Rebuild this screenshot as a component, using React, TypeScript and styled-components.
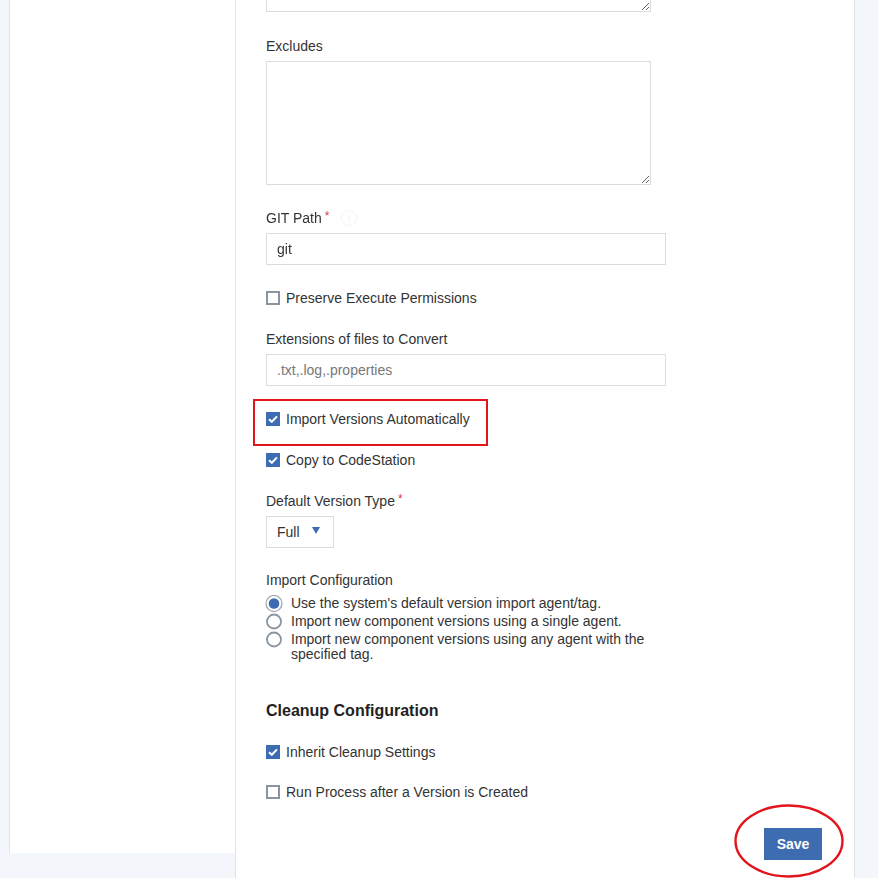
import React from "react";
import styled, { createGlobalStyle } from "styled-components";

const GlobalStyle = createGlobalStyle`
  html, body {
    margin: 0;
    padding: 0;
    background: #f3f6fa;
    font-family: "Liberation Sans", Arial, sans-serif;
    color: #333;
  }
  * { box-sizing: border-box; }
`;

const Page = styled.div`
  display: flex;
  width: 878px;
  height: 878px;
  overflow: hidden;
  background: #f3f6fa;
`;

const Sidebar = styled.aside`
  margin-left: 9px;
  width: 226px;
  height: 853px;
  flex-shrink: 0;
  background: #fff;
  border-left: 1px solid #dfe4ea;
`;

const Main = styled.main`
  width: 620px;
  flex-shrink: 0;
  background: #fff;
  border-left: 1px solid #dfe3e8;
  border-right: 1px solid #dfe3e8;
  padding-left: 30px;
  display: flex;
  flex-direction: column;
  align-items: flex-start;
`;

const Label = styled.div<{ $mt: number }>`
  margin-top: ${(p) => p.$mt}px;
  font-size: 14px;
  line-height: 20px;
  color: #333;
  display: flex;
  align-items: center;
`;

const Required = styled.span`
  color: #e2364f;
  font-size: 12px;
  margin-left: 3px;
  align-self: flex-start;
  line-height: 16px;
`;

const InfoIcon = styled.span`
  margin-left: 12px;
  width: 16px;
  height: 16px;
  border-radius: 50%;
  border: 1px solid #f4f4f4;
  color: #f2f2f2;
  font-size: 10px;
  line-height: 14px;
  text-align: center;
  font-style: italic;
`;

const TextArea = styled.textarea<{ $mt: number; $clipped?: boolean }>`
  display: block;
  margin-top: ${(p) => p.$mt}px;
  width: 385px;
  height: ${(p) => (p.$clipped ? 12 : 124)}px;
  border: 1px solid #dcdcdc;
  border-top: ${(p) => (p.$clipped ? "none" : "1px solid #dcdcdc")};
  background: #fff;
  font-family: inherit;
  font-size: 14px;
  padding: ${(p) => (p.$clipped ? "0 10px" : "6px 10px")};
  outline: none;
`;

const TextInput = styled.input`
  display: block;
  margin-top: 5px;
  width: 400px;
  height: 32px;
  border: 1px solid #dcdcdc;
  padding: 0 10px;
  font-family: inherit;
  font-size: 14px;
  color: #333;
  outline: none;
  &::placeholder {
    color: #777;
  }
`;

const CheckRow = styled.label<{ $mt: number }>`
  position: relative;
  margin-top: ${(p) => p.$mt}px;
  display: flex;
  align-items: center;
  gap: 6px;
  font-size: 14px;
  line-height: 20px;
  color: #333;
`;

const Box = styled.span<{ $checked?: boolean }>`
  width: 14px;
  height: 14px;
  flex-shrink: 0;
  display: flex;
  align-items: center;
  justify-content: center;
  background: ${(p) => (p.$checked ? "#3d6cb3" : "#fff")};
  border: ${(p) => (p.$checked ? "none" : "2px solid #8a959f")};
`;

const Highlight = styled.div<{ $mt: number }>`
  position: relative;
  margin-top: ${(p) => p.$mt}px;
  &::after {
    content: "";
    position: absolute;
    left: -13px;
    top: -10px;
    width: 231px;
    height: 43px;
    border: 2px solid #e3141c;
    pointer-events: none;
  }
`;

const SelectBox = styled.div`
  margin-top: 5px;
  width: 68px;
  height: 32px;
  border: 1px solid #dcdcdc;
  display: flex;
  align-items: center;
  padding-left: 10px;
  font-size: 14px;
  color: #333;
`;

const Caret = styled.span`
  margin-left: 12px;
  width: 0;
  height: 0;
  border-left: 4.5px solid transparent;
  border-right: 4.5px solid transparent;
  border-top: 7px solid #3d6cb3;
  margin-top: -3px;
`;

const RadioGroup = styled.div`
  margin-top: 5px;
  display: flex;
  flex-direction: column;
`;

const RadioRow = styled.label`
  display: flex;
  align-items: flex-start;
  gap: 8px;
  margin-bottom: 1px;
  margin-left: -1px;
  font-size: 14px;
  line-height: 15px;
  color: #333;
`;

const RadioText = styled.span`
  padding-top: 1px;
  width: 360px;
`;

const SectionTitle = styled.h3`
  margin: 38px 0 0;
  font-size: 16px;
  line-height: 20px;
  font-weight: bold;
  color: #222;
`;

const Footer = styled.div`
  margin-top: 26px;
  align-self: stretch;
  display: flex;
  justify-content: flex-end;
  padding-right: 32px;
`;

const ButtonMark = styled.div`
  position: relative;
`;

const Ellipse = styled.svg`
  position: absolute;
  left: -30px;
  top: -24px;
  pointer-events: none;
  overflow: visible;
`;

const SaveButton = styled.button`
  width: 58px;
  height: 32px;
  border: none;
  background: #3d6cb0;
  color: #fff;
  font-family: inherit;
  font-weight: bold;
  font-size: 14px;
  padding: 0;
`;

const Check = () => (
  <svg width="10" height="8" viewBox="0 0 10 8">
    <path d="M1 4.2 L3.8 6.8 L9 1.4" fill="none" stroke="#fff" strokeWidth="2" />
  </svg>
);

const CheckItem = ({ checked, mt, children }: { checked?: boolean; mt: number; children: React.ReactNode }) => (
  <CheckRow $mt={mt}>
    <Box $checked={checked}>{checked && <Check />}</Box>
    {children}
  </CheckRow>
);

const Radio = ({ selected }: { selected?: boolean }) => (
  <svg width="18" height="17" viewBox="0 0 18 17" style={{ flexShrink: 0 }}>
    {selected ? (
      <>
        <circle cx="9" cy="8.5" r="8" fill="#fff" stroke="#9aa3ab" strokeWidth="1.2" />
        <circle cx="9" cy="8.5" r="5.3" fill="#3d6cb3" />
      </>
    ) : (
      <circle cx="9" cy="8.5" r="7" fill="#fff" stroke="#8a959f" strokeWidth="1.8" />
    )}
  </svg>
);

export default function App() {
  return (
    <>
      <GlobalStyle />
      <Page>
        <Sidebar />
        <Main>
          <TextArea $mt={0} $clipped />
          <Label $mt={24}>Excludes</Label>
          <TextArea $mt={5} />
          <Label $mt={23}>
            GIT Path<Required>*</Required>
            <InfoIcon>i</InfoIcon>
          </Label>
          <TextInput defaultValue="git" />
          <CheckItem mt={23}>Preserve Execute Permissions</CheckItem>
          <Label $mt={21}>Extensions of files to Convert</Label>
          <TextInput placeholder=".txt,.log,.properties" />
          <Highlight $mt={23}>
            <CheckItem mt={0} checked>
              Import Versions Automatically
            </CheckItem>
          </Highlight>
          <CheckItem mt={21} checked>
            Copy to CodeStation
          </CheckItem>
          <Label $mt={21}>
            Default Version Type<Required>*</Required>
          </Label>
          <SelectBox>
            Full
            <Caret />
          </SelectBox>
          <Label $mt={22}>Import Configuration</Label>
          <RadioGroup>
            <RadioRow>
              <Radio selected />
              <RadioText>Use the system's default version import agent/tag.</RadioText>
            </RadioRow>
            <RadioRow>
              <Radio />
              <RadioText>Import new component versions using a single agent.</RadioText>
            </RadioRow>
            <RadioRow>
              <Radio />
              <RadioText>Import new component versions using any agent with the specified tag.</RadioText>
            </RadioRow>
          </RadioGroup>
          <SectionTitle>Cleanup Configuration</SectionTitle>
          <CheckItem mt={21} checked>
            Inherit Cleanup Settings
          </CheckItem>
          <CheckItem mt={20}>Run Process after a Version is Created</CheckItem>
          <Footer>
            <ButtonMark>
              <SaveButton>Save</SaveButton>
              <Ellipse width="110" height="74" viewBox="0 0 110 74">
                <ellipse cx="55" cy="37" rx="53.5" ry="35.5" fill="none" stroke="#e3141c" strokeWidth="2.4" />
              </Ellipse>
            </ButtonMark>
          </Footer>
        </Main>
      </Page>
    </>
  );
}
